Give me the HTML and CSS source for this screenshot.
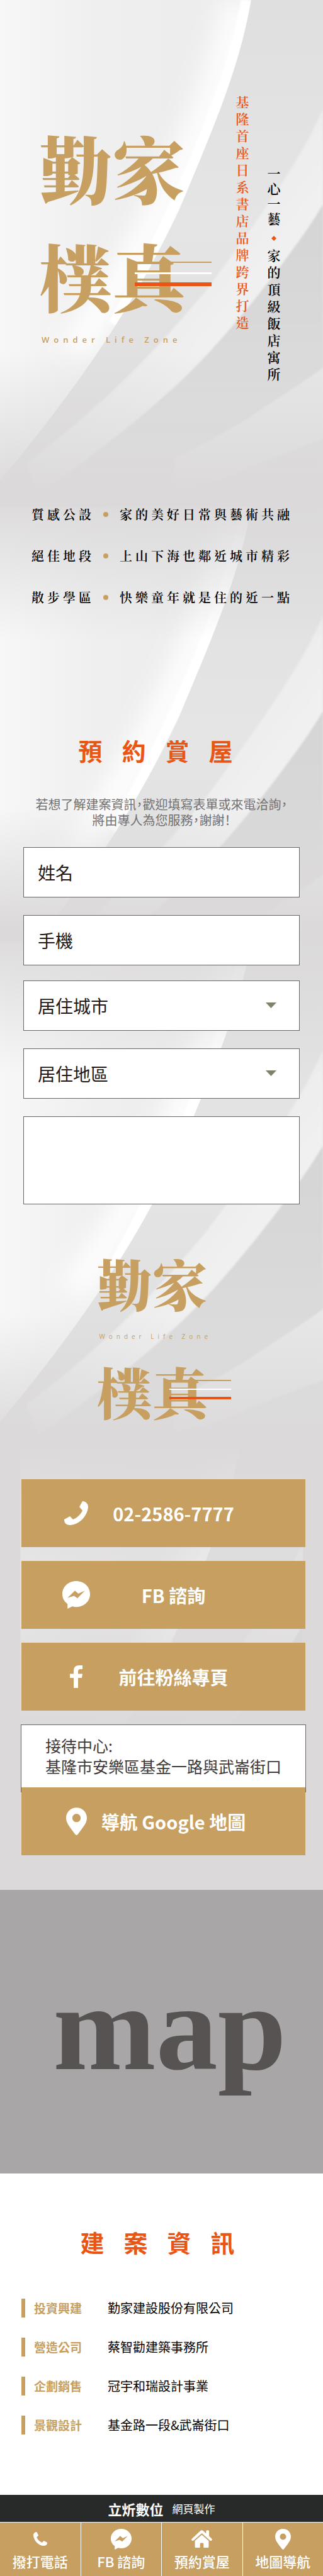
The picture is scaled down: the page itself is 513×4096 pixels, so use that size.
FILE: index.html
```html
<!DOCTYPE html>
<html lang="zh-Hant">
<head>
<meta charset="utf-8">
<meta name="viewport" content="width=device-width, initial-scale=1">
<title>勤家樸真</title>
<link rel="stylesheet" href="styles.css">
</head>
<body>
<svg class="defs" aria-hidden="true">
  <defs>
    <linearGradient id="fade-out" x1="0" y1="0" x2="0" y2="1">
      <stop offset="0" stop-color="#dbd9d9" stop-opacity="0"/>
      <stop offset="1" stop-color="#dbd9d9"/>
    </linearGradient>
    <linearGradient id="fade-in" x1="0" y1="0" x2="0" y2="1">
      <stop offset="0" stop-color="#dbd9d9"/>
      <stop offset="1" stop-color="#dbd9d9" stop-opacity="0"/>
    </linearGradient>
    <linearGradient id="sheet" x1="0" y1="0" x2="1" y2="0">
      <stop offset="0" stop-color="#f7f7f7"/>
      <stop offset="0.3" stop-color="#efefef"/>
      <stop offset="0.7" stop-color="#ececec"/>
    </linearGradient>
    <linearGradient id="fold" x1="0" y1="0" x2="0" y2="1">
      <stop offset="0" stop-color="#dfdfdf"/>
      <stop offset="0.45" stop-color="#e6e5e5"/>
      <stop offset="1" stop-color="#dddcdc"/>
    </linearGradient>
    <linearGradient id="band" x1="0" y1="0" x2="1" y2="1">
      <stop offset="0.3" stop-color="#e5e5e5"/>
      <stop offset="0.6" stop-color="#f0f0f0"/>
    </linearGradient>
    <linearGradient id="deep" x1="0" y1="0" x2="0" y2="1">
      <stop offset="0" stop-color="#d5d5d5"/>
      <stop offset="1" stop-color="#dfdede"/>
    </linearGradient>
    <filter id="soft" x="-30%" y="-10%" width="160%" height="120%"><feGaussianBlur stdDeviation="30"/></filter>
    <filter id="edge" x="-10%" y="-10%" width="120%" height="120%"><feGaussianBlur stdDeviation="2"/></filter>
    <symbol id="silk" viewBox="0 0 751 1180" overflow="hidden">
      <rect width="751" height="1180" fill="url(#sheet)"/>
      <path d="M555 0C510 250 380 520 170 820" fill="none" stroke="#fff" stroke-width="70" filter="url(#soft)"/>
      <path d="M574 0C530 230 400 510 265 755" fill="none" stroke="#fff" stroke-width="26" filter="url(#edge)"/>
      <path d="M584 0C555 165 498 293 417 488C340 650 240 830 0 1120V1180H751V0Z" fill="url(#fold)"/>
      <g filter="url(#edge)">
        <path d="M751 253C700 375 584 534 479 677C370 805 270 920 60 1080L90 1150C290 1010 350 950 407 900C500 815 600 690 661 608C700 555 725 520 751 476Z" fill="url(#band)"/>
        <path d="M751 476C725 520 700 555 661 608C600 690 500 815 407 900C340 960 290 1005 144 1112L200 1180H751Z" fill="url(#deep)"/>
        <path d="M760 850C700 895 640 930 575 975C520 1010 460 1040 407 1066V1140C480 1130 540 1110 575 1090C650 1060 700 1040 760 1020Z" fill="#ececec" opacity="0.7"/>
      </g>
    </symbol>
    <symbol id="i-phone" viewBox="0 0 38 38">
      <path d="M29 0C34 0 38 4 38 9C37 24 23 38 9 38C4 38 0 35 0 30V29L9 24L14 29C20 27 26 21 29 15L24 9Z"/>
    </symbol>
    <symbol id="i-messenger" viewBox="0 0 64 64">
      <path fill-rule="evenodd" d="M32 0C50 0 64 13 64 30S50 60 32 60C29 60 26 59 23 58.500L12 64V53C5 48 0 40 0 30C0 13 14 0 32 0ZM12 39L27 34L35 39.500L52 22L37 29L29 22Z"/>
    </symbol>
    <symbol id="i-facebook" viewBox="0 0 20 36">
      <path d="M6 36V20H0V13.500H6V9C6 3 9 0 15 0H20V6H17C14 6 13 7.500 13 10V13.500H20L19 20H13V36Z"/>
    </symbol>
    <symbol id="i-pin" viewBox="0 0 37 49">
      <path fill-rule="evenodd" d="M18.500 0C29 0 37 8 37 18.500C37 28 30 35 20.500 48Q18.500 50 16.500 48C7 35 0 28 0 18.500C0 8 8 0 18.500 0ZM18.500 11A7.500 7.500 0 1 0 18.500 26A7.500 7.500 0 1 0 18.500 11Z"/>
    </symbol>
    <symbol id="i-home" viewBox="0 0 48 41">
      <path d="M24 11L40 25V39Q40 41 38 41H30Q28 41 28 39V32Q28 30 26 30H22Q20 30 20 32V39Q20 41 18 41H10Q8 41 8 39V25Z"/>
      <path d="M20.500 2Q24 -1.500 27.500 2L34 8V3Q34 0.500 36 0.500H39Q41 0.500 41 3V14L47 20Q49 22 47 24Q45 26 43 24L24 7.500L5 24Q3 26 1 24Q-1 22 1 20Z"/>
    </symbol>
  </defs>
</svg>

<main class="stage">
  <svg class="backdrop" viewBox="0 0 751 4401" preserveAspectRatio="none" aria-hidden="true">
    <rect width="751" height="4401" fill="#dbd9d9"/>
    <use href="#silk" width="751" height="1180"/>
    <rect y="820" width="751" height="330" fill="url(#fade-out)"/>
    <rect y="1150" width="751" height="40" fill="#dbd9d9"/>
    <use href="#silk" y="1180" width="751" height="1180"/>
    <rect y="1150" width="751" height="340" fill="url(#fade-in)"/>
    <rect y="1880" width="751" height="280" fill="url(#fade-out)"/>
    <rect y="2160" width="751" height="220" fill="#dbd9d9"/>
    <use href="#silk" y="2192" width="751" height="1180"/>
    <rect y="2160" width="751" height="340" fill="url(#fade-in)"/>
    <rect y="3060" width="751" height="300" fill="url(#fade-out)"/>
    <g opacity="0.45">
      <use href="#silk" y="3370" width="751" height="1031"/>
    </g>
    <rect y="3360" width="751" height="300" fill="url(#fade-in)"/>
    <rect y="3720" width="751" height="320" fill="url(#fade-out)"/>
    <rect y="4040" width="751" height="361" fill="#dbd9d9"/>
  </svg>

  <header class="hero">
    <div class="brand">
      <h1 class="mark">
        <span>勤家</span>
        <span>樸真</span>
        <i class="rule rule-gold"></i><i class="rule rule-white"></i><i class="rule rule-orange"></i>
      </h1>
      <p class="tagline">Wonder Life Zone</p>
    </div>
    <p class="slogan slogan-orange">基隆首座日系書店品牌跨界打造</p>
    <p class="slogan slogan-black"><span class="tight">一心一藝</span><i class="diamond"></i><span>家的頂級飯店寓所</span></p>
  </header>

  <ul class="features">
    <li><span>質感公設</span><i class="dot"></i><span>家的美好日常與藝術共融</span></li>
    <li><span>絕佳地段</span><i class="dot"></i><span>上山下海也鄰近城市精彩</span></li>
    <li><span>散步學區</span><i class="dot"></i><span>快樂童年就是住的近一點</span></li>
  </ul>

  <section class="booking" id="booking">
    <h2 class="title">預約賞屋</h2>
    <p class="intro">若想了解建案資訊，歡迎填寫表單或來電洽詢，<br>將由專人為您服務，謝謝！</p>
    <form class="form">
      <div class="fields">
        <input class="field" type="text" placeholder="姓名" aria-label="姓名">
        <input class="field" type="tel" placeholder="手機" aria-label="手機">
      </div>
      <div class="fields">
        <div class="picker"><select class="field" aria-label="居住城市"><option>居住城市</option></select></div>
        <div class="picker"><select class="field" aria-label="居住地區"><option>居住地區</option></select></div>
        <textarea class="field message" aria-label="留言"></textarea>
      </div>
    </form>
  </section>

  <div class="mark mark-small">
    <span>勤家</span>
    <p class="tagline">Wonder Life Zone</p>
    <span>樸真</span>
    <i class="rule rule-gold"></i><i class="rule rule-white"></i><i class="rule rule-orange"></i>
  </div>

  <section class="contact">
    <a class="action" href="tel:0225867777"><span class="ico"><svg width="38" height="38"><use href="#i-phone"/></svg></span><span class="label">02-2586-7777</span></a>
    <a class="action" href="#fb"><span class="ico"><svg width="44" height="44"><use href="#i-messenger"/></svg></span><span class="label">FB 諮詢</span></a>
    <a class="action" href="#page"><span class="ico"><svg width="20" height="36"><use href="#i-facebook"/></svg></span><span class="label">前往粉絲專頁</span></a>
    <div class="visit">
      <address class="address">接待中心:<br>基隆市安樂區基金一路與武崙街口</address>
      <a class="action" href="#map"><span class="ico"><svg width="33" height="44"><use href="#i-pin"/></svg></span><span class="label">導航 Google 地圖</span></a>
    </div>
  </section>
</main>

<section class="map" id="map">map</section>

<section class="info">
  <h2 class="title">建案資訊</h2>
  <dl class="facts">
    <div><dt>投資興建</dt><dd>勤家建設股份有限公司</dd></div>
    <div><dt>營造公司</dt><dd>蔡智勸建築事務所</dd></div>
    <div><dt>企劃銷售</dt><dd>冠宇和瑞設計事業</dd></div>
    <div><dt>景觀設計</dt><dd>基金路一段&amp;武崙街口</dd></div>
  </dl>
</section>

<footer class="credit"><strong>立炘數位</strong><span>網頁製作</span></footer>

<nav class="bar">
  <a href="tel:0225867777"><span class="ico"><svg class="flip" width="22" height="22"><use href="#i-phone"/></svg></span>撥打電話</a>
  <a href="#fb"><span class="ico"><svg width="33" height="33"><use href="#i-messenger"/></svg></span>FB 諮詢</a>
  <a href="#booking"><span class="ico"><svg width="33" height="28"><use href="#i-home"/></svg></span>預約賞屋</a>
  <a href="#map"><span class="ico"><svg width="25" height="33"><use href="#i-pin"/></svg></span>地圖導航</a>
</nav>
</body>
</html>
```
FILE: styles.css
```css
:root {
  --gold: #c69f61;
  --orange: #ea5514;
  --sans: "Noto Sans CJK TC", sans-serif;
  --serif: "Noto Serif CJK TC", "Noto Serif TC", "Noto Sans CJK TC", serif;
}

* { box-sizing: border-box; }

body {
  margin: 0;
  font-family: var(--sans);
  color: #000;
  background: #fff;
}

h1, h2, p, ul, dl, dd { margin: 0; padding: 0; }
ul { list-style: none; }
a { color: inherit; text-decoration: none; }
svg { display: block; fill: currentColor; }
.defs { position: absolute; width: 0; height: 0; }

.stage {
  position: relative;
  padding-bottom: 55px;
}
.backdrop {
  position: absolute;
  inset: 0;
  width: 100%;
  height: 100%;
  z-index: -1;
}

/* Hero */
.hero {
  display: grid;
  grid-template-columns: 1fr auto auto;
  column-gap: 26px;
  align-items: start;
  padding: 152px 66px 0 62px;
}
.brand { padding-top: 27px; }
.mark {
  position: relative;
  color: var(--gold);
  font-family: var(--serif);
  font-size: 116px;
  line-height: 172px;
  font-weight: 900;
}
.mark span { display: block; white-space: nowrap; }
.tagline {
  margin-top: 7px;
  padding-left: 4px;
  color: var(--gold);
  font: 600 13px/20px "Open Sans", "Noto Sans", sans-serif;
  letter-spacing: 7px;
  white-space: nowrap;
}
.rule { position: absolute; left: 152px; width: 122px; }
.rule-gold { top: 237px; height: 2px; background: var(--gold); }
.rule-white { top: 254px; height: 3px; background: #fff; }
.rule-orange { top: 270px; height: 6px; background: var(--orange); }

.slogan {
  writing-mode: vertical-rl;
  font-family: var(--serif);
  font-size: 21px;
  line-height: 24px;
  font-weight: 600;
  letter-spacing: 6px;
  white-space: nowrap;
}
.slogan-orange { color: var(--orange); }
.slogan-black { padding-top: 114px; }
.tight { letter-spacing: 3px; }
.diamond {
  display: inline-block;
  width: 8px;
  height: 8px;
  margin: 13px 0;
  background: var(--orange);
  clip-path: polygon(50% 0, 100% 50%, 50% 100%, 0 50%);
}

/* Features */
.features {
  display: grid;
  gap: 38px;
  padding: 192px 50px 0;
  font-family: var(--serif);
  font-size: 20px;
  line-height: 28px;
  font-weight: 600;
  letter-spacing: 5px;
  white-space: nowrap;
}
.features li { display: flex; align-items: center; }
.dot {
  width: 8px;
  height: 8px;
  margin: 0 18px 0 14px;
  border-radius: 50%;
  background: var(--gold);
}

/* Booking */
.title {
  padding-left: 12px;
  color: var(--orange);
  font-size: 38px;
  line-height: 44px;
  font-weight: 700;
  letter-spacing: 31px;
  text-align: center;
}
.booking { padding: 207px 37px 0; }
.intro {
  margin-top: 51px;
  color: #727171;
  font-size: 20px;
  line-height: 25px;
  text-align: center;
  font-feature-settings: "halt";
  white-space: nowrap;
}
.form {
  display: grid;
  gap: 24px;
  margin-top: 31px;
}
.fields { display: grid; gap: 28px; }
.field {
  display: block;
  width: 100%;
  height: 80px;
  margin: 0;
  padding: 0 22px;
  border: 1px solid #666;
  border-radius: 0;
  background: #fff;
  color: #231815;
  font: 400 28px/40px var(--sans);
  appearance: none;
}
.field::placeholder { color: #231815; opacity: 1; }
.message { height: 140px; resize: none; }
.picker { position: relative; }
.picker::after {
  content: "";
  position: absolute;
  right: 37px;
  top: 50%;
  width: 17px;
  height: 9px;
  margin-top: -5px;
  background: #7f8168;
  clip-path: polygon(0 0, 100% 0, 50% 100%);
  pointer-events: none;
}

/* Second logo */
.mark-small {
  width: 206px;
  margin: 64px auto 0;
  font-size: 88px;
  line-height: 120px;
}
.mark-small .tagline {
  margin: 0;
  font-size: 10px;
  font-weight: 400;
  line-height: 52px;
  letter-spacing: 6px;
}
.mark-small .rule { left: 115px; width: 98px; }
.mark-small .rule-gold { top: 215px; }
.mark-small .rule-white { top: 229px; height: 2px; }
.mark-small .rule-orange { top: 242px; height: 4px; }

/* Contact */
.contact {
  display: grid;
  gap: 22px;
  padding: 81px 29px 0 34px;
}
.action {
  position: relative;
  display: flex;
  align-items: center;
  height: 108px;
  padding: 0 82px 0 60px;
  background: var(--gold);
  color: #fff;
  font-size: 29px;
  line-height: 40px;
  font-weight: 700;
}
.action .ico { width: 54px; }
.ico { display: flex; justify-content: center; align-items: center; }
.label { flex: 1; text-align: center; white-space: nowrap; }
.address {
  height: 108px;
  margin: 0 -1px -8px;
  padding: 16px 38px;
  border: 1px solid #666;
  background: #fff;
  color: #3e3a39;
  font-size: 25px;
  line-height: 33px;
  font-style: normal;
  white-space: nowrap;
}

/* Map */
.map {
  height: 451px;
  padding: 107px 0 0 26px;
  background: #a8a6a6;
  color: #575353;
  font: 700 196px/224px "Liberation Serif", serif;
  text-align: center;
}

/* Project info */
.info { padding: 87px 34px 0; }
.info .title { padding-left: 18px; }
.facts {
  display: grid;
  gap: 32px;
  margin: 68px 0 96px;
  font-size: 20px;
  line-height: 30px;
}
.facts div { display: flex; }
.facts dt {
  width: 137px;
  padding-left: 14px;
  border-left: 6px solid var(--gold);
  color: var(--gold);
  font-size: 19px;
  font-weight: 700;
}
.facts dd { font-weight: 400; white-space: nowrap; }

.credit {
  display: flex;
  justify-content: center;
  align-items: center;
  gap: 14px;
  height: 43px;
  background: #282a29;
  color: #fff;
  font-size: 17px;
}
.credit strong { font-size: 22px; font-weight: 700; }

.bar {
  display: grid;
  grid-template-columns: repeat(4, 1fr);
  gap: 1px;
  padding-top: 1px;
  background: #fff;
}
.bar a {
  display: flex;
  flex-direction: column;
  align-items: center;
  height: 87px;
  padding-top: 6px;
  background: var(--gold);
  color: #fff;
  font-size: 22px;
  line-height: 30px;
  font-weight: 500;
  white-space: nowrap;
}
.bar .ico { height: 40px; }
.flip { transform: scaleX(-1); }
```
